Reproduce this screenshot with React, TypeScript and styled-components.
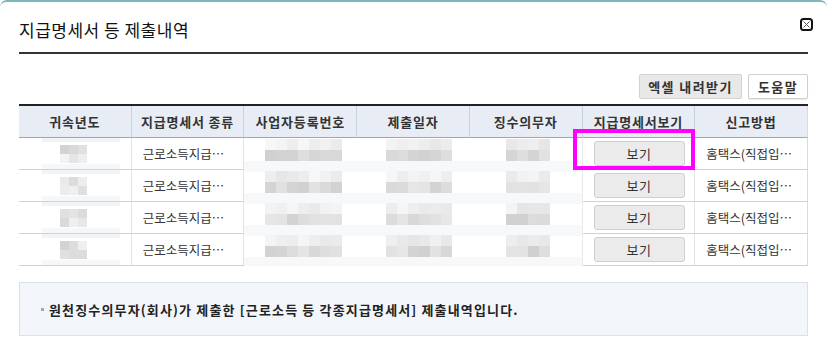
import React from 'react';
import styled, { createGlobalStyle } from 'styled-components';

const GlobalStyle = createGlobalStyle`
  html, body { margin: 0; padding: 0; background: #fff; }
  body { font-family: "Noto Sans CJK KR", "Noto Sans", sans-serif; color: #333; }
`;

const Frame = styled.div`
  position: relative;
  width: 827px;
  height: 352px;
  box-sizing: border-box;
  border-top: 2px solid #7db6bb;
  border-radius: 7px 7px 0 0;
  padding: 0 19px;
  background: #fff;
  overflow: hidden;
`;

const TitleBar = styled.div`
  height: 44px;
  padding-top: 6px;
  display: flex;
  align-items: center;
  border-bottom: 2px solid #333;
`;

const Title = styled.h1`
  margin: 0;
  font-size: 17px;
  line-height: 20px;
  font-weight: 400;
  letter-spacing: 0.5px;
  color: #111;
`;

const CloseButton = styled.button`
  position: absolute;
  top: 16px;
  right: 14px;
  width: 13px;
  height: 13px;
  padding: 0;
  border: 0;
  background: transparent;
  display: flex;
  cursor: pointer;
`;

const Toolbar = styled.div`
  margin: 20px 0 5px;
  height: 25px;
  display: flex;
  justify-content: flex-end;
  gap: 6px;
`;

const ToolButton = styled.button<{ $primary?: boolean; $w: number }>`
  width: ${(p) => p.$w}px;
  height: 25px;
  box-sizing: border-box;
  padding: 0;
  border: 1px solid ${(p) => (p.$primary ? '#d2d2d2' : '#cfcfcf')};
  border-radius: 2px;
  background: ${(p) => (p.$primary ? '#e8e8e8' : '#fff')};
  box-shadow: ${(p) => (p.$primary ? 'none' : '0 1px 1px rgba(0,0,0,0.08)')};
  font-family: inherit;
  font-size: 13px;
  font-weight: 700;
  letter-spacing: 1.4px;
  line-height: 23px;
  color: #333;
`;

const TableWrap = styled.div`
  position: relative;
`;

const Table = styled.table`
  width: 100%;
  border-collapse: separate;
  border-spacing: 0;
  table-layout: fixed;
  border-top: 2px solid #222;
`;

const Th = styled.th`
  height: 32px;
  box-sizing: border-box;
  padding: 0;
  background: #e8edf5;
  border-bottom: 1px solid #9ea6b1;
  border-right: 1px solid #c9d1dc;
  font-size: 13px;
  font-weight: 700;
  letter-spacing: 0.8px;
  color: #333;
  text-align: center;
  white-space: nowrap;
  &:last-child { border-right-color: #d6dce4; }
`;

const Td = styled.td<{ $center?: boolean }>`
  position: relative;
  height: 32px;
  box-sizing: border-box;
  padding: 0 11px;
  border-bottom: 1px solid #ccd2da;
  border-right: 1px solid #dfe3e8;
  font-size: 12.5px;
  color: #333;
  white-space: nowrap;
  overflow: ${(p) => (p.$center ? 'visible' : 'hidden')};
  text-align: ${(p) => (p.$center ? 'center' : 'left')};
  vertical-align: middle;
  &:last-child { border-right-color: #d6dce4; }
`;

const BlurTd = styled.td<{ $first: boolean; $pad: number; $edge?: boolean }>`
  height: 32px;
  box-sizing: border-box;
  padding: 1px 0 0 ${(p) => p.$pad}px;
  vertical-align: top;
  border-bottom: 1px solid #f7f8fa;
  border-right: ${(p) => (p.$edge ? '1px solid #e6e9ee' : '0')};
  background: linear-gradient(
    to bottom,
    ${(p) => (p.$first ? '#fff' : '#f7f8fa')} 0 2px,
    #fff 2px 23px,
    #f7f8fa 23px
  );
`;

const PatchOverlay = styled.svg`
  position: absolute;
  left: 23px;
  top: 0;
  z-index: 1;
  display: block;
`;

const ViewButton = styled.button`
  width: 91px;
  height: 25px;
  box-sizing: border-box;
  padding: 0;
  border: 1px solid #cfcfcf;
  border-radius: 3px;
  background: #ebebeb;
  font-family: inherit;
  font-size: 13px;
  line-height: 23px;
  letter-spacing: 0.5px;
  color: #333;
  vertical-align: middle;
`;

const Highlight = styled.div`
  position: absolute;
  left: 554px;
  top: 25px;
  width: 122px;
  height: 41px;
  box-sizing: border-box;
  border: 4px solid #ff00ff;
  pointer-events: none;
  z-index: 2;
`;

const InfoBox = styled.div`
  margin-top: 16px;
  height: 54px;
  box-sizing: border-box;
  padding-left: 21px;
  display: flex;
  align-items: center;
  background: #f2f5fa;
  border: 1px solid #dbe1ea;
`;

const Bullet = styled.span`
  width: 3px;
  height: 3px;
  margin-right: 5px;
  background: #a8a8a8;
  flex: none;
`;

const InfoText = styled.p`
  margin: 0;
  font-size: 13px;
  font-weight: 700;
  letter-spacing: 1.15px;
  color: #222;
  white-space: nowrap;
`;

const shade = (seed: number, lo: number, hi: number) => {
  const x = Math.sin(seed * 12.9898) * 43758.5453;
  const f = x - Math.floor(x);
  const v = Math.round(lo + f * (hi - lo));
  return `rgb(${v},${v},${v})`;
};

const Mosaic = ({ cols, bw, bh, seed }: { cols: number; bw: number; bh: number; seed: number }) => (
  <svg width={cols * bw} height={bh * 2} style={{ display: 'block' }}>
    {Array.from({ length: cols }).map((_, i) => (
      <React.Fragment key={i}>
        <rect x={i * bw} y={0} width={bw} height={bh} fill={shade(seed + i, 230, 247)} />
        <rect x={i * bw} y={bh} width={bw} height={bh} fill={shade(seed + i + 50, 208, 232)} />
      </React.Fragment>
    ))}
  </svg>
);

const YearPatch = ({ seed }: { seed: number }) => (
  <PatchOverlay width={78} height={35}>
    <rect x={0} y={0} width={78} height={4} fill="#f3f4f6" />
    <rect x={0} y={26} width={78} height={9} fill="#f6f7f9" />
    {[0, 1, 2].map((i) => (
      <React.Fragment key={i}>
        <rect x={18 + i * 9} y={7} width={9} height={9} fill={shade(seed + i, 205, 240)} />
        <rect x={18 + i * 9} y={16} width={9} height={9} fill={shade(seed + i + 30, 215, 245)} />
      </React.Fragment>
    ))}
  </PatchOverlay>
);

const headers = ['귀속년도', '지급명세서 종류', '사업자등록번호', '제출일자', '징수의무자', '지급명세서보기', '신고방법'];
const rows = [1, 2, 3, 4];

export default function App() {
  return (
    <>
      <GlobalStyle />
      <Frame>
        <TitleBar>
          <Title>지급명세서 등 제출내역</Title>
        </TitleBar>
        <CloseButton aria-label="닫기">
          <svg width="13" height="13" viewBox="0 0 13 13">
            <rect x="1" y="1" width="11" height="11" rx="2.5" fill="#fff" stroke="#111" strokeWidth="2" />
            <path d="M3.5 3.5 L9.5 9.5 M9.5 3.5 L3.5 9.5" stroke="#555" strokeWidth="1" />
          </svg>
        </CloseButton>
        <Toolbar>
          <ToolButton $primary $w={103}>엑셀 내려받기</ToolButton>
          <ToolButton $w={60}>도움말</ToolButton>
        </Toolbar>
        <TableWrap>
          <Table>
            <thead>
              <tr>
                {headers.map((h) => (
                  <Th key={h}>{h}</Th>
                ))}
              </tr>
            </thead>
            <tbody>
              {rows.map((r, idx) => (
                <tr key={r}>
                  <Td>
                    <YearPatch seed={r * 7} />
                  </Td>
                  <Td>근로소득지급…</Td>
                  <BlurTd $first={idx === 0} $pad={21}>
                    <Mosaic cols={7} bw={11} bh={11} seed={r * 13} />
                  </BlurTd>
                  <BlurTd $first={idx === 0} $pad={29}>
                    <Mosaic cols={6} bw={11} bh={11} seed={r * 17 + 3} />
                  </BlurTd>
                  <BlurTd $first={idx === 0} $pad={36} $edge>
                    <Mosaic cols={4} bw={11} bh={11} seed={r * 19 + 5} />
                  </BlurTd>
                  <Td $center>
                    <ViewButton>보기</ViewButton>
                  </Td>
                  <Td>홈택스(직접입…</Td>
                </tr>
              ))}
            </tbody>
          </Table>
          <Highlight />
        </TableWrap>
        <InfoBox>
          <Bullet />
          <InfoText>원천징수의무자(회사)가 제출한 [근로소득 등 각종지급명세서] 제출내역입니다.</InfoText>
        </InfoBox>
      </Frame>
    </>
  );
}
